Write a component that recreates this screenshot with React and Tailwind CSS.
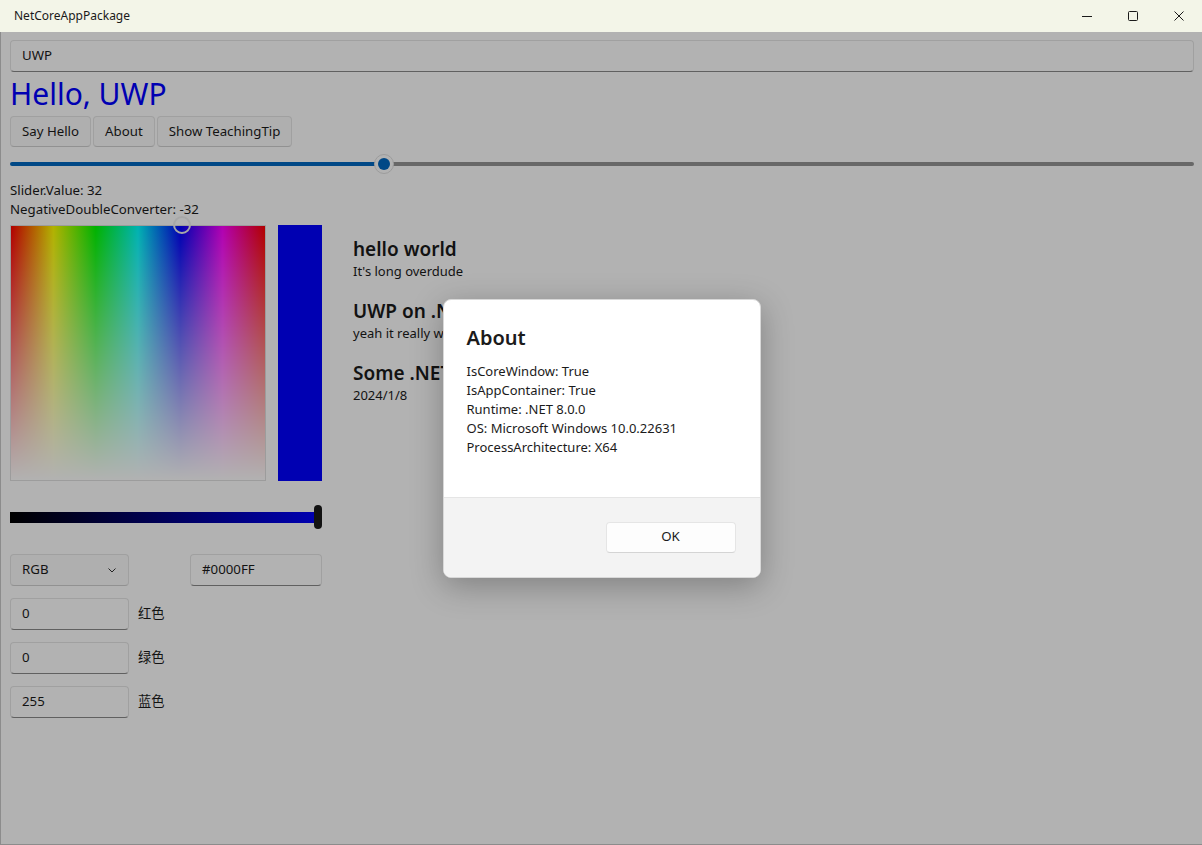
import React from 'react';

const SANS = "font-['Noto_Sans','Noto_Sans_CJK_SC',sans-serif]";

function TextBox({ value, className = '' }) {
  return (
    <div className={`h-[32px] flex items-center px-[11px] bg-white border border-[#e5e5e5] border-b-[#8a8a8a] rounded-[4px] text-[13.25px] text-[#1b1b1b] ${className}`}>
      {value}
    </div>
  );
}

function Btn({ children }) {
  return (
    <div className="h-[31px] flex items-center px-[11px] bg-[#fbfbfb] border border-[#e5e5e5] border-b-[#d0d0d0] rounded-[4px] text-[13.25px] text-[#1b1b1b]">
      {children}
    </div>
  );
}

function CaptionButtons() {
  return (
    <div className="flex h-full">
      <div className="w-[46px] h-full flex items-center justify-center">
        <svg width="12" height="12" viewBox="0 0 12 12"><path d="M1 6.5h10" stroke="#1a1a1a" strokeWidth="1" /></svg>
      </div>
      <div className="w-[46px] h-full flex items-center justify-center">
        <svg width="12" height="12" viewBox="0 0 12 12"><rect x="1.5" y="1.5" width="9" height="9" rx="1" fill="none" stroke="#1a1a1a" strokeWidth="1" /></svg>
      </div>
      <div className="w-[46px] h-full flex items-center justify-center">
        <svg width="12" height="12" viewBox="0 0 12 12"><path d="M1.5 1.5l9 9M10.5 1.5l-9 9" stroke="#1a1a1a" strokeWidth="1" /></svg>
      </div>
    </div>
  );
}

function ColorPicker() {
  return (
    <div className="w-[312px] shrink-0">
      <div className="flex gap-[12px]">
        <div className="relative w-[256px] h-[256px] border border-[#e0e0e0] bg-[linear-gradient(to_right,#ff0000,#ffff00,#00ff00,#00ffff,#0000ff,#ff00ff,#ff0000)]">
          <div className="absolute inset-0 bg-[linear-gradient(to_bottom,rgba(255,255,255,0),#ffffff)]" />
          <div className="absolute left-[162px] top-[-10px] w-[18px] h-[18px] rounded-full border-2 border-[#f0f0f0]" />
        </div>
        <div className="w-[44px] h-[256px] bg-[#0000ff]" />
      </div>
      <div className="relative mt-[24px] h-[24px] flex items-center">
        <div className="w-[308px] h-[11px] bg-[linear-gradient(to_right,#000000,#0000ff)]" />
        <div className="absolute left-[304px] top-0 w-[8px] h-[24px] rounded-full bg-[#1a1a1a]" />
      </div>
      <div className="mt-[25px] flex justify-between">
        <div className="w-[119px] h-[32px] flex items-center justify-between px-[11px] bg-[#fbfbfb] border border-[#e5e5e5] border-b-[#d0d0d0] rounded-[4px] text-[13.25px] text-[#1b1b1b]">
          <span>RGB</span>
          <svg width="10" height="10" viewBox="0 0 10 10"><path d="M1.5 3.5l3.5 3.5 3.5-3.5" fill="none" stroke="#333" strokeWidth="1" /></svg>
        </div>
        <TextBox value="#0000FF" className="w-[132px]" />
      </div>
      {[['0', '红色'], ['0', '绿色'], ['255', '蓝色']].map(([v, l], i) => (
        <div key={i} className="mt-[12px] flex items-center gap-[9px]">
          <TextBox value={v} className="w-[119px]" />
          <span className="text-[13.25px] text-[#1b1b1b]">{l}</span>
        </div>
      ))}
    </div>
  );
}

function Notes() {
  const items = [
    ['hello world', "It's long overdude"],
    ['UWP on .NET 8', 'yeah it really works'],
    ['Some .NET 8', '2024/1/8'],
  ];
  return (
    <div className="pt-[11px] flex flex-col gap-[17px]">
      {items.map(([t, s], i) => (
        <div key={i}>
          <div className="text-[19px] leading-[26px] font-semibold text-[#1b1b1b]">{t}</div>
          <div className="text-[13px] leading-[19px] text-[#1b1b1b]">{s}</div>
        </div>
      ))}
    </div>
  );
}

function AboutDialog() {
  const lines = [
    'IsCoreWindow: True',
    'IsAppContainer: True',
    'Runtime: .NET 8.0.0',
    'OS: Microsoft Windows 10.0.22631',
    'ProcessArchitecture: X64',
  ];
  return (
    <div className="w-[318px] h-[279px] flex flex-col bg-white rounded-[8px] overflow-hidden shadow-[0_8px_32px_rgba(0,0,0,0.28)] border border-[#d8d8d8]">
      <div className="flex-1 px-[23px] pt-[24px]">
        <div className="text-[20px] leading-[28px] font-semibold text-[#1b1b1b]">About</div>
        <div className="mt-[10px] text-[13px] leading-[19px] text-[#1b1b1b]">
          {lines.map((l) => <div key={l}>{l}</div>)}
        </div>
      </div>
      <div className="h-[80px] bg-[#f3f3f3] border-t border-[#e5e5e5] flex items-center justify-end pr-[24px]">
        <div className="w-[130px] h-[31px] flex items-center justify-center bg-[#fdfdfd] border border-[#e5e5e5] border-b-[#d4d4d4] rounded-[4px] text-[13.25px] text-[#1b1b1b]">OK</div>
      </div>
    </div>
  );
}

export default function App() {
  return (
    <div className={`w-[1202px] h-[845px] flex flex-col overflow-hidden ${SANS}`}>
      <div className="h-[32px] shrink-0 flex items-center justify-between bg-[#f3f5e8]">
        <span className="pl-[14px] text-[12px] text-[#1a1a1a]">NetCoreAppPackage</span>
        <CaptionButtons />
      </div>
      <div className="relative flex-1 bg-white border-l border-b border-[#8c8c8c]">
        <div className="pl-[9px] pr-[8px] pt-[8px]">
          <TextBox value="UWP" className="w-full" />
          <div className="h-[42px] flex items-end text-[30px] leading-[40px] text-[#0000ff]">Hello, UWP</div>
          <div className="mt-[2px] flex gap-[2px]">
            <Btn>Say Hello</Btn>
            <Btn>About</Btn>
            <Btn>Show TeachingTip</Btn>
          </div>
          <div className="relative h-[32px] mt-[1px] flex items-center">
            <div className="w-[374px] h-[4px] rounded-l-full bg-[#0067c0]" />
            <div className="flex-1 h-[4px] rounded-r-full bg-[#959595]" />
            <div className="absolute left-[364px] top-[6px] w-[20px] h-[20px] rounded-full bg-white border border-[#e0e0e0] flex items-center justify-center">
              <div className="w-[12px] h-[12px] rounded-full bg-[#0067c0]" />
            </div>
          </div>
          <div className="mt-[1px] text-[13.25px] leading-[19px] text-[#1b1b1b]">
            <div>Slider.Value: 32</div>
            <div>NegativeDoubleConverter: -32</div>
          </div>
          <div className="mt-[6px] flex gap-[31px]">
            <ColorPicker />
            <Notes />
          </div>
        </div>
        <div className="absolute inset-0 bg-black/30" />
        <div className="absolute inset-0 flex items-center justify-center">
          <AboutDialog />
        </div>
      </div>
    </div>
  );
}
